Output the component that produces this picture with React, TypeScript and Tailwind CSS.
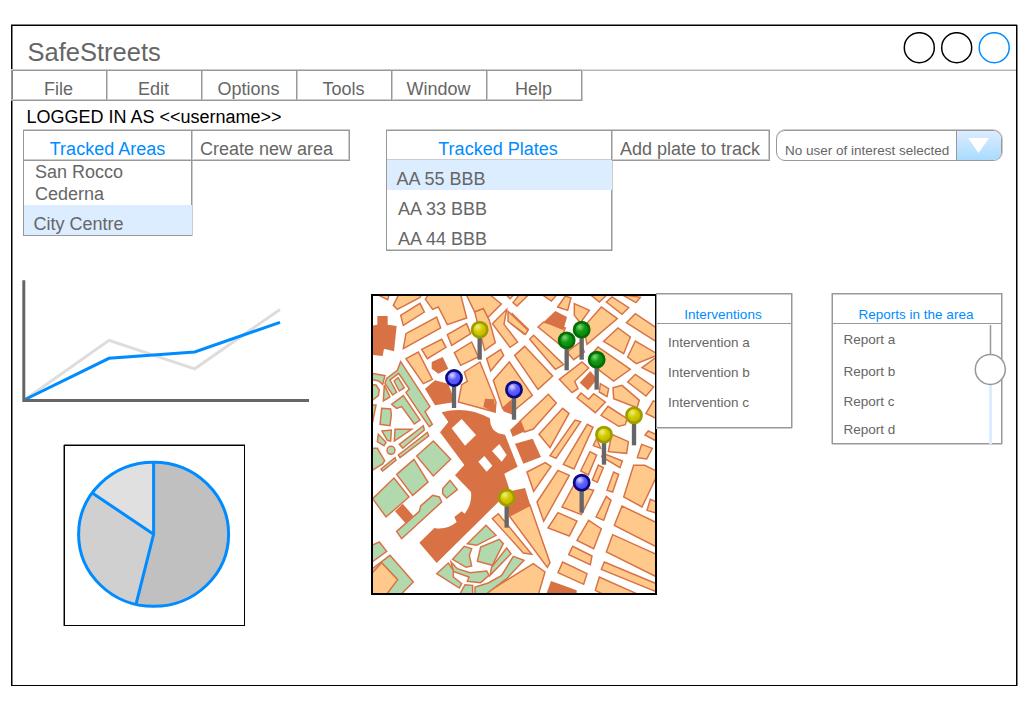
import type { ReactNode } from "react";

type Tile = { x: number; y: number; shapes: string[] };

const blocks: Tile[] = [
  {
    x: 0,
    y: 0,
    shapes: [
      "20,0 60,0 53,23 30,12",
      "80,0 160,0 150,16 82,52 70,40 84,12",
      "92,70 150,34 163,60 100,100",
      "108,125 200,75 212,108 100,170",
      "180,0 270,0 290,78 232,98 205,45 188,52 166,22",
      "155,172 215,142 228,166 172,200",
      "108,200 145,180 187,262 160,275",
      "232,128 290,95 302,125 245,160",
      "253,182 305,150 325,195 272,220",
      "285,0 350,0 394,36 352,78 340,50 314,60",
      "314,60 340,50 358,85 376,152 344,175",
      "350,200 392,173 401,190 362,237",
      "283,240 330,210 378,330 375,360 265,330 275,278 292,268",
    ],
  },
  {
    x: 270,
    y: 0,
    shapes: [
      "97,95 140,52 132,97 173,150 150,166",
      "157,65 205,112 192,126 153,95",
      "100,265 148,210 217,310 157,360 128,350",
      "130,0 170,0 150,20",
      "148,672 210,640 270,812 262,826",
      "97,680 115,665 215,787 190,783",
      "70,908 220,815 255,840 235,908",
    ],
  },
  {
    x: 426,
    y: 0,
    shapes: [
      "3,32 22,8 50,8 15,42",
      "-12,58 48,115 40,127 -12,88",
      "90,8 135,8 118,27",
      "137,45 160,12 177,18 167,55",
      "187,35 232,55 205,93 187,70",
      "235,8 285,8 262,30",
      "283,30 300,15 350,47 330,67",
      "330,8 385,16 372,32",
      "343,92 370,65 440,112 440,154",
      "78,105 95,90 160,108 142,157",
      "215,105 268,45 316,80 225,157",
      "165,180 205,150 217,180 185,203",
      "275,148 318,108 355,135 335,185",
      "347,195 370,147 440,188 373,215",
      "53,142 65,130 155,218 130,232",
      "8,190 38,163 122,252 78,292",
      "142,262 210,210 230,228 188,268 198,290 180,302",
      "245,180 258,165 355,232 305,267 262,235",
      "262,300 265,275 290,290 285,314",
      "303,287 330,280 382,325 375,347 305,320",
      "390,227 440,190 440,252",
      "347,270 370,247 425,285 402,312",
      "195,318 207,303 230,322 245,305 280,330 250,362",
      "267,370 288,343 345,380 340,398 320,403",
    ],
  },
  {
    x: 0,
    y: 309,
    shapes: [
      "450,79 535,-2 559,24 490,102 463,111",
      "507,118 578,40 597,55 540,158",
      "540,182 615,75 632,80 558,190",
      "580,208 652,88 669,97 612,222",
      "715,170 725,118 775,140 770,175",
      "670,152 680,130 692,160",
      "695,185 700,175 757,198 750,218",
      "632,228 660,170 680,180 655,240",
      "667,255 685,210 700,218 682,262",
      "802,188 815,148 847,160 830,192",
      "825,120 835,108 870,124 870,144",
      "828,55 850,18 870,25 870,76",
    ],
  },
  {
    x: 426,
    y: 450,
    shapes: [
      "45,90 100,62 117,73 65,148",
      "75,180 138,85 172,100 95,238",
      "285,145 305,90 320,97 302,150",
      "150,195 185,130 245,145 208,218",
      "252,225 283,163 297,175 275,235",
      "108,258 138,212 195,237 172,282",
      "195,295 230,235 268,260 245,320",
      "335,165 365,70 398,70 440,90 390,195",
      "405,205 415,172 440,182 440,216",
      "307,250 330,192 440,245 440,318",
      "283,330 302,278 440,340 440,408",
      "170,338 182,313 240,342 235,368",
      "138,392 152,360 225,395 215,427",
      "268,382 277,360 440,428 440,452",
      "250,445 262,405 385,460 280,460",
    ],
  },
];

const parks: Tile[] = [
  {
    x: 0,
    y: 189,
    shapes: [
      "92,20 180,155 165,170 187,208 178,215 150,175 108,112 118,102 86,55 60,75 80,112 68,120 45,85 50,70 82,46",
      "72,78 84,68 103,98 88,108",
      "43,90 60,126 40,138",
      "65,148 100,122 150,195 133,207 95,155 80,160",
      "0,54 45,62 38,88 26,78 0,72",
      "0,88 18,90 28,105 25,122 0,142",
      "35,160 62,162 64,180 60,212 30,208",
      "0,150 18,150 8,200 0,200",
      "36,228 64,225 62,258 52,256",
      "75,223 125,223 73,258",
      "25,238 48,262 42,272 22,260",
      "88,268 160,212 163,225 98,280",
      "85,300 172,232 176,243 90,308",
      "33,342 75,308 78,316 38,348",
      "0,280 22,280 44,317 38,327 0,350",
      "140,303 190,258 242,313 190,363",
    ],
  },
  {
    x: 0,
    y: 450,
    shapes: [
      "80,97 132,52 174,120 128,160",
      "8,170 72,108 117,165 48,225",
      "80,268 148,208 152,192 188,160 208,165 215,180 95,290",
      "218,140 240,115 262,143 230,168 218,155",
      "0,312 28,300 50,328 0,365",
      "0,385 60,340 130,420 80,470 0,470",
      "248,352 283,313 305,320 298,340 305,372 288,376",
      "243,360 262,380 300,392 350,387 357,400 332,422 292,418 297,405 250,388",
      "200,395 235,363 250,385 250,405 275,425 268,438",
      "262,470 285,428 308,430 308,470",
    ],
  },
  {
    x: 270,
    y: 0,
    shapes: [
      "22,755 78,700 108,730 50,760",
      "52,808 62,765 118,742 130,755 97,820",
      "90,850 95,825 140,768 153,785",
      "45,920 45,885 85,873 125,850 160,793 192,805 140,860 60,920",
    ],
  },
];

const gardens: Tile[] = [{ x: 0, y: 450, shapes: ["0,400 35,362 83,413 40,470 0,470"] }];

const landmarks: Tile[] = [
  {
    x: 0,
    y: 0,
    shapes: [
      "22,72 53,72 53,98 80,102 72,178 42,170 38,192 0,188 0,102 22,98",
      "185,210 218,195 235,230 205,245 185,230",
      "165,290 195,265 235,275 255,330 195,340",
      "345,320 372,322 378,362 340,345",
      "398,346 425,322 428,368 400,358",
      "420,414 452,384 465,418 428,434",
      "435,455 488,440 513,495 460,515",
      "521,90 556,57 591,75 580,115",
      "629,272 661,237 681,262 654,295",
      "75,658 98,635 130,672 108,695",
      "529,906 543,867 620,895 620,906",
    ],
  },
];

const pins: { x: number; y: number; tone: "yellow" | "blue" | "green" }[] = [
  { x: 329, y: 113, tone: "yellow" },
  { x: 635, y: 113, tone: "green" },
  { x: 590, y: 145, tone: "green" },
  { x: 680, y: 203, tone: "green" },
  { x: 252, y: 258, tone: "blue" },
  { x: 432, y: 293, tone: "blue" },
  { x: 792, y: 370, tone: "yellow" },
  { x: 702, y: 428, tone: "yellow" },
  { x: 635, y: 572, tone: "blue" },
  { x: 410, y: 617, tone: "yellow" },
];

const pinTones = {
  yellow: { light: "#f0f080", mid: "#d4cc00", edge: "#bcb400", rim: "#a09c00" },
  green: { light: "#80d880", mid: "#119c11", edge: "#088408", rim: "#066c06" },
  blue: { light: "#dcdcff", mid: "#6060ff", edge: "#4848f0", rim: "#0a0a80" },
};

function Layer({ tiles, fill, stroke }: { tiles: Tile[]; fill: string; stroke: string }) {
  return (
    <g fill={fill} stroke={stroke} strokeWidth="4.4">
      {tiles.map((t, i) => (
        <g key={i} transform={`translate(${t.x} ${t.y})`}>
          {t.shapes.map((s) => (
            <polygon key={s} points={s} />
          ))}
        </g>
      ))}
    </g>
  );
}

function CityMap() {
  return (
    <svg className="block h-[297px] w-[282px]" viewBox="9 12 846 891">
      <defs>
        {(["yellow", "green", "blue"] as const).map((t) => (
          <radialGradient key={t} id={`pin-${t}`} cx="0.38" cy="0.32" r="0.7">
            <stop offset="0" stopColor={pinTones[t].light} />
            <stop offset="0.45" stopColor={pinTones[t].mid} />
            <stop offset="1" stopColor={pinTones[t].edge} />
          </radialGradient>
        ))}
      </defs>
      <rect width="870" height="920" fill="#fff" />
      <Layer tiles={blocks} fill="#ffc98b" stroke="#d87245" />
      <Layer tiles={parks} fill="#b2d8ae" stroke="#d87245" />
      <Layer tiles={gardens} fill="#ffc98b" stroke="#d87245" />
      <circle cx="63" cy="475" r="12" fill="#b2d8ae" stroke="#d87245" strokeWidth="4.4" />
      <Layer tiles={landmarks} fill="#d87245" stroke="none" />
      <path
        d="M215 361 Q290 340 360 379 Q360 425 405 428 L443 524 L403 545 L420 598 L465 588 L481 640 L418 672 L400 625 L385 630 L200 813 L148 752 L193 708 Q230 715 260 690 L253 675 L275 658 L284 665 Q307 635 303 600 L255 550 L283 519 L210 421 L235 390 Z"
        fill="#d87245"
      />
      <g fill="#fff">
        <path d="M275 381 L318 429 L285 461 L245 409 Z" />
        <path d="M366 477 L388 456 L410 489 L395 509 Z" />
        <path d="M325 509 L343 492 L367 521 L350 539 Z" />
      </g>
      {pins.map((p) => (
        <g key={`${p.x}-${p.y}`}>
          <rect x={p.x - 6.5} y={p.y + 20} width="13" height="70" fill="#666" />
          <circle
            cx={p.x}
            cy={p.y}
            r="22.8"
            fill={`url(#pin-${p.tone})`}
            stroke={pinTones[p.tone].rim}
            strokeWidth="8"
          />
        </g>
      ))}
    </svg>
  );
}

function LineChart() {
  return (
    <svg className="ml-[10px] block h-[123px] w-[288px]" viewBox="22 280 288 123" fill="none">
      <path d="M25 399.5 L109 340.3 L194.7 368.8 L280 309.4" stroke="#ddd" strokeWidth="3" />
      <path d="M25 399.5 L109 358.3 L194.7 352 L280 322.3" stroke="#008cff" strokeWidth="3" />
      <path d="M23.8 280.3 V400.4 H309" stroke="#666" strokeWidth="3" />
    </svg>
  );
}

function PieChart() {
  return (
    <div className="ml-[52px] mt-[42px] h-[181px] w-[181px] border border-black shadow-[0_-1px_0_#888,-1px_0_0_#888]">
      <svg className="block h-[179px] w-[179px]" viewBox="65 446 179 179">
        <ellipse cx="153.6" cy="534.3" rx="75" ry="72" fill="#c0c0c0" />
        <path d="M153.6 534.3 L136 604.4 A75 72 0 0 1 92.3 493 Z" fill="#d0d0d0" />
        <path d="M153.6 534.3 L92.3 493 A75 72 0 0 1 153.6 462.3 Z" fill="#e0e0e0" />
        <g fill="none" stroke="#008cff" strokeWidth="3">
          <ellipse cx="153.6" cy="534.3" rx="75" ry="72" />
          <path d="M153.6 462.3 V534.3 L136 604.4 M153.6 534.3 L92.3 493" />
        </g>
      </svg>
    </div>
  );
}

function SideButton({ children }: { children: ReactNode }) {
  return (
    <button className="h-[31px] w-[158px] whitespace-nowrap border-y border-r border-[#999] pl-2 pt-[7px] text-left leading-[22px] shadow-[0_-1px_0_#ccc,inset_-1px_-1px_0_#ccc]">
      {children}
    </button>
  );
}

export default function App() {
  return (
    <div className="h-[701px] w-[1027px] overflow-hidden bg-white pl-[11px] pt-[25px] font-['Liberation_Sans',Arial,sans-serif] text-[18px] text-[#666]">
      <div className="h-[661px] w-[1006px] border border-black shadow-[0_-1px_0_#808080,1px_0_0_#808080,inset_1px_0_0_#808080]">
        <header className="flex h-[45px] justify-between border-b border-[#b5b5b5] pl-[15.5px] pr-[5px] pt-[6px] shadow-[inset_0_-1px_0_#ddd]">
          <h1 className="mt-[5px] text-[25.5px] leading-[30px]">SafeStreets</h1>
          <svg className="h-[32px] w-[108px]" viewBox="0 0 108 32" fill="none" strokeWidth="1.5">
            <circle cx="16.3" cy="15.7" r="15" stroke="#000" />
            <circle cx="53.7" cy="15.7" r="15" stroke="#000" />
            <circle cx="91.2" cy="15.7" r="15" stroke="#008cff" />
          </svg>
        </header>

        <nav className="-ml-px -mt-px flex h-[31px] w-[571px] border border-[#999] shadow-[0_-1px_0_#ccc,1px_0_0_#ccc,inset_0_-1px_0_#ccc]">
          {["File", "Edit", "Options", "Tools", "Window", "Help"].map((label) => (
            <a
              key={label}
              className="w-[95px] border-r border-[#999] pr-px pt-[7px] text-center leading-[22px] shadow-[1px_0_0_#ccc] last:w-[94px] last:border-r-0 last:shadow-none"
            >
              {label}
            </a>
          ))}
        </nav>

        <p className="ml-[14.5px] mt-[5px] leading-[22px] text-black">LOGGED IN AS &lt;&lt;username&gt;&gt;</p>

        <section className="ml-[11px] mt-[2px] flex h-[121px] items-start">
          <div className="h-[106px] w-[169px] border border-[#999] shadow-[0_-1px_0_#ccc,1px_0_0_#ccc]">
            <h2 className="h-[30px] border-b border-[#999] pt-[7px] text-center leading-[22px] text-[#008cff] shadow-[inset_0_-1px_0_#ccc]">
              Tracked Areas
            </h2>
            <ul className="leading-[22px]">
              <li className="pl-[11px]">San Rocco</li>
              <li className="pl-[11px]">Cederna</li>
              <li className="-mr-px h-[30px] bg-[#dcedff] pl-[9.5px] pt-[8px]">City Centre</li>
            </ul>
          </div>
          <SideButton>Create new area</SideButton>

          <div className="ml-[36px] h-[121px] w-[226px] border border-[#999] shadow-[0_-1px_0_#ccc,1px_0_0_#ccc,inset_0_-1px_0_#ccc]">
            <h2 className="h-[29px] border-b border-[#ccc] pr-[2px] pt-[7px] text-center leading-[22px] text-[#008cff]">
              Tracked Plates
            </h2>
            <ul className="leading-[22px]">
              <li className="-mr-px h-[30px] bg-[#dcedff] pl-[9.5px] pt-[8px]">AA 55 BBB</li>
              <li className="h-[30px] pl-[11px] pt-[8px]">AA 33 BBB</li>
              <li className="h-[30px] pl-[11px] pt-[8px]">AA 44 BBB</li>
            </ul>
          </div>
          <SideButton>Add plate to track</SideButton>

          <button className="ml-[6px] flex h-[31px] w-[226px] overflow-hidden rounded-[9px] border border-[#999] text-[13.5px] shadow-[0_-1px_0_#ccc,1px_0_0_#ccc]">
            <span className="w-[179px] whitespace-nowrap pl-[8px] pt-[12px] text-left leading-4">
              No user of interest selected
            </span>
            <span className="flex h-full flex-1 justify-center border-l border-[#999] bg-linear-to-b from-[#dcedff] to-[#a9dbff] pr-px pt-[7px]">
              <svg className="h-[15px] w-[21px]" viewBox="0 0 21 15">
                <path d="M0 0 H21 L10.5 15 Z" fill="#fff" />
              </svg>
            </span>
          </button>
        </section>

        <section className="mt-[29px] flex items-start">
          <div className="w-[359px]">
            <LineChart />
            <PieChart />
          </div>

          <div className="mt-[14px] h-[301px] w-[286px] border-2 border-black">
            <CityMap />
          </div>

          <div className="-ml-px mt-[13px] h-[135px] w-[136px] border border-[#999] text-[13.5px] leading-4 shadow-[0_1px_0_#ccc,1px_0_0_#ccc,inset_0_1px_0_#ccc]">
            <h2 className="h-[30px] border-b border-[#999] pr-[2px] pt-[13px] text-center text-[#008cff]">
              Interventions
            </h2>
            <ul className="pl-[11px] pt-[11px]">
              <li className="h-[30px]">Intervention a</li>
              <li className="h-[30px]">Intervention b</li>
              <li className="h-[30px]">Intervention c</li>
            </ul>
          </div>

          <div className="relative ml-[40px] mt-[13px] h-[151px] w-[170px] border border-[#999] text-[13.5px] leading-4 shadow-[-1px_0_0_#ccc,0_1px_0_#ccc,1px_0_0_#ccc,inset_0_1px_0_#ccc]">
            <h2 className="h-[30px] border-b border-[#999] pr-[2px] pt-[13px] text-center text-[#008cff]">
              Reports in the area
            </h2>
            <ul className="pl-[10.5px] pt-[8px]">
              <li className="h-[32px]">Report a</li>
              <li className="h-[30px]">Report b</li>
              <li className="h-[28px]">Report c</li>
              <li>Report d</li>
            </ul>
            <svg className="absolute left-[141px] top-[30px] h-[120px] w-[34px]" viewBox="974 324 34 120">
              <path d="M990.5 325 V369" stroke="#999" strokeWidth="1.5" />
              <path d="M990.5 369 V444" stroke="#dcedff" strokeWidth="3" />
              <circle cx="990.3" cy="369.4" r="15" fill="#fff" stroke="#999" strokeWidth="1.5" />
            </svg>
          </div>
        </section>
      </div>
    </div>
  );
}
